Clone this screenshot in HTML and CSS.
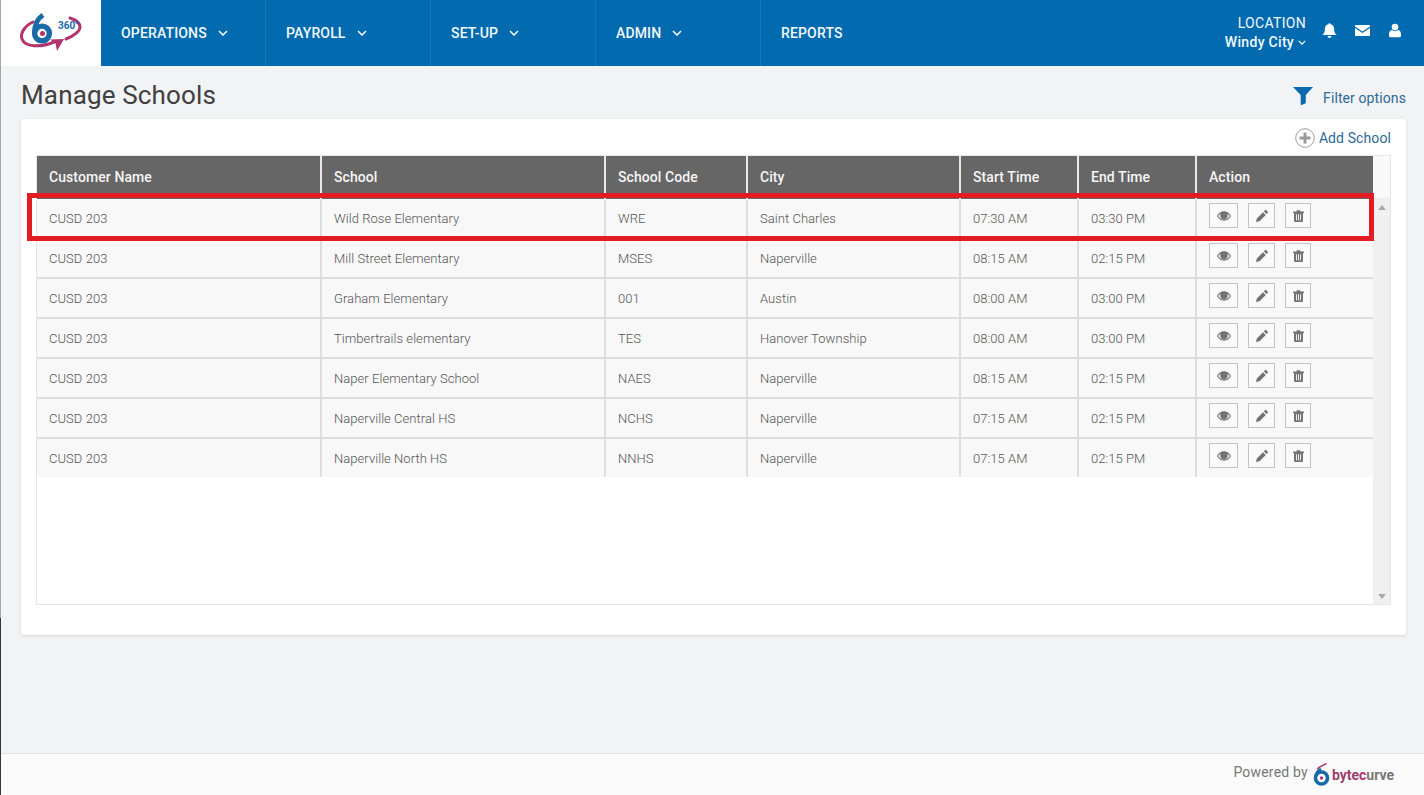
FILE: index.html
```html
<!DOCTYPE html>
<html lang="en">
<head>
<meta charset="utf-8">
<title>Manage Schools</title>
<link rel="stylesheet" href="styles.css">
</head>
<body>
<svg width="0" height="0" class="defs">
  <symbol id="i-eye" viewBox="0 0 15 10"><path fill="currentColor" fill-rule="evenodd" d="M7.500 0C4.300 0 1.600 1.900 0 5c1.600 3.100 4.300 5 7.500 5S13.400 8.100 15 5C13.400 1.900 10.700 0 7.500 0zM1.300 5c.7-1.100 1.600-2 2.700-2.700A4 4 0 0 0 3.400 4.500C3.400 6.800 5.200 8.600 7.500 8.600s4.100-1.800 4.100-4.100c0-.8-.2-1.600-.6-2.200 1.100.7 2 1.600 2.700 2.700-1.400 2.100-3.600 3.800-6.200 3.800S2.700 7.100 1.300 5z"/></symbol>
  <symbol id="i-pencil" viewBox="0 0 12 12"><path fill="currentColor" d="M9 .3c.4-.4 1-.4 1.400 0l1.300 1.300c.4.4.4 1 0 1.400l-1.100 1.100-2.700-2.700zM7.100 2.200l2.700 2.700-6.300 6.300L0 12l.8-3.500z"/></symbol>
  <symbol id="i-trash" viewBox="0 0 11 12"><path fill="currentColor" fill-rule="evenodd" d="M3.400 1.500 4 .2h3l.6 1.300H10.500a.5.5 0 0 1 .5.500V3H10v8a1 1 0 0 1-1 1H2a1 1 0 0 1-1-1V3H0V2a.5.5 0 0 1 .5-.5zM3 4.300v6.200h.9V4.300zm2.050 0v6.200h.9V4.300zm2.050 0v6.200h.9V4.300z"/></symbol>
</svg>

<div class="edge"></div>

<header class="topbar">
  <a class="brand">
    <svg class="brand-logo" viewBox="0 0 62 42" width="62" height="42">
      <path fill="none" stroke="#b3336f" stroke-width="3" stroke-linecap="round" d="M13 10C4 14 0 22 2 27c3 8 18 9 32 3"/>
      <path fill="#b3336f" d="M30 27.500l14-.5-7 12-1.500-7.500z"/>
      <path fill="none" stroke="#b3336f" stroke-width="3" stroke-linecap="round" d="M46 27c8-3 14-8 14-12 0-4-4-7-10-9"/>
      <circle cx="22" cy="21.500" r="7.400" fill="#fff" stroke="#1b6aa8" stroke-width="5.400"/>
      <path fill="none" stroke="#1b6aa8" stroke-width="5" d="M14.600 21C14.400 12 17 7 23 3"/>
      <circle cx="22.500" cy="21.500" r="2.500" fill="#b3336f"/>
      <text x="38" y="17" class="brand-360">360°</text>
    </svg>
  </a>
  <nav class="mainnav">
    <a class="navitem">OPERATIONS<svg class="chev" viewBox="0 0 10 6"><path d="M1 1l4 4 4-4"/></svg></a>
    <a class="navitem">PAYROLL<svg class="chev" viewBox="0 0 10 6"><path d="M1 1l4 4 4-4"/></svg></a>
    <a class="navitem">SET-UP<svg class="chev" viewBox="0 0 10 6"><path d="M1 1l4 4 4-4"/></svg></a>
    <a class="navitem">ADMIN<svg class="chev" viewBox="0 0 10 6"><path d="M1 1l4 4 4-4"/></svg></a>
    <a class="navitem navlast">REPORTS</a>
  </nav>
  <div class="location">
    <span>LOCATION</span>
    <span class="loc-name">Windy City<svg class="chev chev-sm" viewBox="0 0 10 6"><path d="M1 1l4 4 4-4"/></svg></span>
  </div>
  <div class="topicons">
    <svg class="ti ti-bell" viewBox="0 0 14 14"><path fill="#fff" d="M7 .2c.6 0 1 .4 1 .9 2.100.4 3.300 2 3.300 4.300 0 3 .7 4.500 2.500 5.900H.2C2 9.900 2.700 8.400 2.700 5.400 2.700 3.100 3.900 1.500 6 1.100c0-.5.4-.9 1-.9zM5.200 12.200h3.600c0 1-.8 1.700-1.800 1.700S5.200 13.200 5.200 12.200z"/></svg>
    <svg class="ti ti-mail" viewBox="0 0 15 11"><path fill="#fff" d="M1 0h13c.5 0 1 .4 1 1v.6L7.500 6.500 0 1.600V1c0-.6.500-1 1-1zM0 3l7.500 4.900L15 3v7c0 .6-.5 1-1 1H1c-.5 0-1-.4-1-1z"/></svg>
    <svg class="ti ti-user" viewBox="0 0 12 14"><circle fill="#fff" cx="6" cy="3.600" r="3.300"/><path fill="#fff" d="M2.700 6.500c1.800 1.500 4.800 1.500 6.600 0 1.700.5 2.700 2 2.700 4.500v1.300c0 .9-.6 1.500-1.500 1.500h-9C.6 13.800 0 13.200 0 12.300V11c0-2.500 1-4 2.700-4.500z"/></svg>
  </div>
</header>

<main class="content">
  <div class="titlerow">
    <h1 class="pagetitle">Manage Schools</h1>
    <a class="filterlink">
      <svg class="filter-ico" viewBox="0 0 20 18"><path fill="#0b69ad" d="M0 0h20l-7.200 8v7.300c0 .5-.2.800-.6 1.100L8.600 18c-.4.200-.9-.1-.9-.6V8z"/></svg>
      Filter options
    </a>
  </div>
  <section class="card">
    <div class="cardtop">
      <a class="addlink">
        <svg class="add-ico" viewBox="0 0 20 20"><circle cx="10" cy="10" r="9.300" fill="none" stroke="#9a9a9a" stroke-width="1"/><path fill="#9a9a9a" d="M8.500 4.500h3v4h4v3h-4v4h-3v-4h-4v-3h4z"/></svg>
        Add School
      </a>
    </div>
    <div class="tableframe">
      <div class="tablearea">
        <table class="grid">
          <colgroup>
            <col class="c1"><col class="c2"><col class="c3"><col class="c4"><col class="c5"><col class="c6"><col class="c7">
          </colgroup>
          <thead>
            <tr><th>Customer Name</th><th>School</th><th>School Code</th><th>City</th><th>Start Time</th><th>End Time</th><th>Action</th></tr>
          </thead>
          <tbody>
            <tr><td>CUSD 203</td><td>Wild Rose Elementary</td><td>WRE</td><td>Saint Charles</td><td>07:30 AM</td><td>03:30 PM</td><td><div class="acts"><a class="act act-v"><svg><use href="#i-eye"/></svg></a><a class="act act-e"><svg><use href="#i-pencil"/></svg></a><a class="act act-d"><svg><use href="#i-trash"/></svg></a></div></td></tr>
            <tr><td>CUSD 203</td><td>Mill Street Elementary</td><td>MSES</td><td>Naperville</td><td>08:15 AM</td><td>02:15 PM</td><td><div class="acts"><a class="act act-v"><svg><use href="#i-eye"/></svg></a><a class="act act-e"><svg><use href="#i-pencil"/></svg></a><a class="act act-d"><svg><use href="#i-trash"/></svg></a></div></td></tr>
            <tr><td>CUSD 203</td><td>Graham Elementary</td><td>001</td><td>Austin</td><td>08:00 AM</td><td>03:00 PM</td><td><div class="acts"><a class="act act-v"><svg><use href="#i-eye"/></svg></a><a class="act act-e"><svg><use href="#i-pencil"/></svg></a><a class="act act-d"><svg><use href="#i-trash"/></svg></a></div></td></tr>
            <tr><td>CUSD 203</td><td>Timbertrails elementary</td><td>TES</td><td>Hanover Township</td><td>08:00 AM</td><td>03:00 PM</td><td><div class="acts"><a class="act act-v"><svg><use href="#i-eye"/></svg></a><a class="act act-e"><svg><use href="#i-pencil"/></svg></a><a class="act act-d"><svg><use href="#i-trash"/></svg></a></div></td></tr>
            <tr><td>CUSD 203</td><td>Naper Elementary School</td><td>NAES</td><td>Naperville</td><td>08:15 AM</td><td>02:15 PM</td><td><div class="acts"><a class="act act-v"><svg><use href="#i-eye"/></svg></a><a class="act act-e"><svg><use href="#i-pencil"/></svg></a><a class="act act-d"><svg><use href="#i-trash"/></svg></a></div></td></tr>
            <tr><td>CUSD 203</td><td>Naperville Central HS</td><td>NCHS</td><td>Naperville</td><td>07:15 AM</td><td>02:15 PM</td><td><div class="acts"><a class="act act-v"><svg><use href="#i-eye"/></svg></a><a class="act act-e"><svg><use href="#i-pencil"/></svg></a><a class="act act-d"><svg><use href="#i-trash"/></svg></a></div></td></tr>
            <tr><td>CUSD 203</td><td>Naperville North HS</td><td>NNHS</td><td>Naperville</td><td>07:15 AM</td><td>02:15 PM</td><td><div class="acts"><a class="act act-v"><svg><use href="#i-eye"/></svg></a><a class="act act-e"><svg><use href="#i-pencil"/></svg></a><a class="act act-d"><svg><use href="#i-trash"/></svg></a></div></td></tr>
          </tbody>
        </table>
      </div>
      <div class="scroller">
        <div class="scrollhead"></div>
        <div class="scrolltrack">
          <svg class="arrow" viewBox="0 0 8 5"><path fill="#a9a9a9" d="M4 0l4 5H0z"/></svg>
          <svg class="arrow" viewBox="0 0 8 5"><path fill="#a9a9a9" d="M4 5L0 0h8z"/></svg>
        </div>
      </div>
      <div class="highlight"></div>
    </div>
  </section>
</main>

<footer class="footer">
  <span class="powered">Powered by</span>
  <svg class="byte-logo" viewBox="0 0 17 23" width="17" height="23">
    <path fill="none" stroke="#b3336f" stroke-width="1.400" d="M4 6C7 3.500 10 2 13.500.5"/>
    <circle cx="8.500" cy="15" r="6" fill="#fff" stroke="#1b6aa8" stroke-width="3.600"/>
    <path fill="none" stroke="#1b6aa8" stroke-width="3" d="M2.500 14C3 9.500 5 7.500 8 6"/>
    <circle cx="8.500" cy="15" r="1.700" fill="#b3336f"/>
  </svg>
  <span class="wordmark"><span class="wm-a">byte</span><span class="wm-b">c</span><span class="wm-c">urve</span></span>
</footer>
</body>
</html>
```

FILE: styles.css
```css
* { box-sizing: border-box; }
html, body { height: 100%; }
body {
  margin: 0;
  height: 795px;
  overflow: hidden;
  display: flex;
  flex-direction: column;
  background: #f1f3f5;
  font-family: Roboto, "Liberation Sans", sans-serif;
  color: #555;
  position: relative;
}
.defs { position: absolute; }
.edge {
  position: absolute;
  z-index: 2;
  left: 0;
  top: 0;
  width: 1px;
  height: 795px;
  background: linear-gradient(#a6a6a6 0, #a6a6a6 618px, #33353a 618px, #33353a 100%);
}

/* Top bar */
.topbar {
  display: flex;
  align-items: stretch;
  height: 66px;
  flex: none;
  background: #026aae;
  color: #fff;
}
.brand {
  width: 101px;
  flex: none;
  background: #fff;
  display: flex;
  align-items: center;
  padding-left: 20px;
}
.brand-logo { display: block; }
.brand-360 { font: 700 10px Roboto, sans-serif; fill: #1b6aa8; }
.mainnav { display: flex; flex: 1; }
.navitem {
  width: 165px;
  display: flex;
  align-items: center;
  padding-left: 20px;
  font-size: 14px;
  font-weight: 500;
  letter-spacing: .15px;
  border-right: 1px solid #1a78b5;
  color: #f2f8fc;
}
.navlast { border-right: 0; }
.chev {
  width: 10px;
  height: 6px;
  margin-left: 11px;
  fill: none;
  stroke: #fff;
  stroke-width: 1.500;
}
.chev-sm { width: 8px; height: 5px; margin-left: 4px; }
.location {
  display: flex;
  flex-direction: column;
  align-items: flex-end;
  justify-content: center;
  font-size: 14px;
  line-height: 19px;
  letter-spacing: .3px;
  margin-right: 16px;
  color: #f2f8fc;
}
.loc-name { display: flex; align-items: center; font-weight: 500; }
.topicons {
  display: flex;
  align-items: center;
  padding-right: 23px;
  padding-bottom: 5px;
}
.ti { display: block; }
.ti-bell { width: 15px; height: 15px; }
.ti-mail { width: 15px; height: 11px; margin-left: 18px; }
.ti-user { width: 12px; height: 15px; margin-left: 19px; }

/* Content */
.content {
  flex: 1;
  padding: 0 18px 0 21px;
}
.titlerow {
  display: flex;
  justify-content: space-between;
  align-items: center;
  height: 53px;
}
.pagetitle {
  margin: 4px 0 0;
  font-size: 26px;
  font-weight: 400;
  color: #404040;
  letter-spacing: .15px;
}
.filterlink {
  display: flex;
  align-items: center;
  font-size: 14px;
  letter-spacing: .1px;
  color: #2d6a99;
  margin-top: 11px;
}
.filter-ico { width: 20px; height: 18px; margin-right: 10px; margin-bottom: 4px; }
.card {
  height: 516px;
  background: #fff;
  border-radius: 3px;
  box-shadow: 0 1px 3px rgba(0,0,0,.12);
  padding: 0 15px;
}
.cardtop {
  height: 36px;
  display: flex;
  justify-content: flex-end;
  align-items: center;
  padding-top: 2px;
}
.addlink {
  display: flex;
  align-items: center;
  font-size: 14px;
  letter-spacing: .1px;
  color: #2d6a99;
}
.add-ico { width: 20px; height: 20px; margin-right: 4px; }
.tableframe {
  position: relative;
  display: flex;
  height: 450px;
  border: 1px solid #e6e6e6;
}
.tablearea { width: 1336px; flex: none; }
.grid {
  border-collapse: separate;
  border-spacing: 0;
  table-layout: fixed;
  width: 1336px;
}
.c1 { width: 285px; }
.c2 { width: 284px; }
.c3 { width: 142px; }
.c4 { width: 213px; }
.c5 { width: 118px; }
.c6 { width: 118px; }
.c7 { width: 176px; }
.grid th {
  height: 43px;
  background: #666;
  color: #f5f5f5;
  text-align: left;
  font-size: 14px;
  font-weight: 500;
  letter-spacing: .08px;
  padding: 0 0 1px 12px;
  border-right: 2px solid #e8e8e8;
}
.grid th:last-child { border-right: 0; }
.grid td {
  height: 40px;
  background: #f8f8f8;
  color: #555;
  font-size: 13px;
  font-weight: 300;
  letter-spacing: .05px;
  padding: 0 0 0 12px;
  border-right: 2px solid #dedede;
  border-bottom: 2px solid #dedede;
}
.grid td:last-child { border-right: 0; }
.grid tbody tr:last-child td { border-bottom: 0; height: 38px; }
.acts { display: flex; margin-top: -5px; }
.act {
  height: 25px;
  display: flex;
  align-items: center;
  justify-content: center;
  border: 1px solid #c4c4c4;
  background: #fafafa;
  color: #737373;
}
.act-v { width: 29px; margin-right: 10px; }
.act-e { width: 27px; margin-right: 10px; }
.act-d { width: 26px; }
.act svg { display: block; }
.act-v svg { width: 14px; height: 10px; }
.act-e svg { width: 12px; height: 12px; }
.act-d svg { width: 11px; height: 12px; }
.scroller {
  flex: 1;
  display: flex;
  flex-direction: column;
}
.scrollhead { height: 43px; background: #f9f9f9; border-bottom: 1px solid #ededed; }
.scrolltrack {
  flex: 1;
  background: #f0f0f0;
  display: flex;
  flex-direction: column;
  justify-content: space-between;
  align-items: center;
  padding: 6px 0 5px;
}
.arrow { width: 8px; height: 5px; display: block; }
.highlight {
  position: absolute;
  left: -10px;
  top: 37px;
  width: 1347px;
  height: 48px;
  border: 5px solid #e31b23;
  pointer-events: none;
}

/* Footer */
.footer {
  flex: none;
  height: 42px;
  background: #fafafa;
  border-top: 1px solid #e3e3e3;
  display: flex;
  align-items: center;
  justify-content: flex-end;
  padding: 0 30px 2px 0;
}
.powered { font-size: 14px; letter-spacing: .2px; color: #777; margin-right: 5px; margin-bottom: 3px; }
.byte-logo { margin-right: 2px; margin-top: 1px; }
.wordmark { font-size: 14px; font-weight: 700; margin-top: 3px; }
.wm-a { color: #9c3f6c; }
.wm-b { color: #b3336f; }
.wm-c { color: #777; }
```
